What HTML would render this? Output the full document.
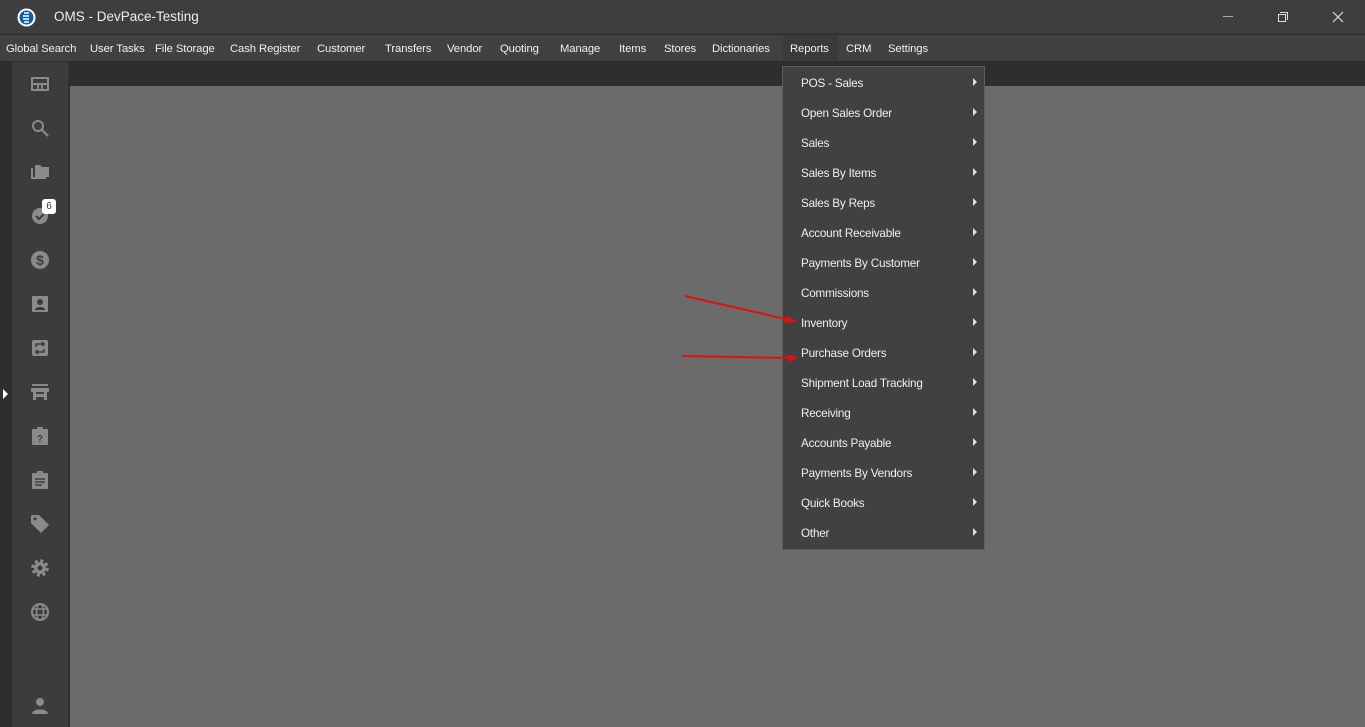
<!DOCTYPE html>
<html><head><style>
*{margin:0;padding:0;box-sizing:border-box}
body{width:1365px;height:727px;overflow:hidden;background:#2e2e2e;font-family:"Liberation Sans",sans-serif;font-size:11px;color:#f0f0f0;position:relative}
.title{position:absolute;left:0;top:0;width:1365px;height:34px;background:#3e3e3e;border-bottom:1px solid #343434}
.title .t{position:absolute;left:54px;top:9px;font-size:13.5px;color:#eee}
.menu{position:absolute;left:0;top:35px;width:1365px;height:26px;background:#414141}
.menu span{position:absolute;top:8px;font-size:11.3px;letter-spacing:-0.1px}
.side{position:absolute;left:12px;top:62px;width:57px;height:665px;background:#3c3c3c;border-right:1px solid #333}
.content{position:absolute;left:70px;top:86px;width:1295px;height:641px;background:#6b6b6b}
.ic{position:absolute;left:18px;width:20px;height:20px}
.dd{position:absolute;left:782px;top:66px;width:203px;height:484px;background:#414141;border:1px solid #5e5e5e}
.dd div{position:absolute;left:18px;font-size:11.7px;letter-spacing:-0.2px;margin-top:2px}
.dd i{position:absolute;left:190px;width:0;height:0;border-left:4px solid #ddd;border-top:4px solid transparent;border-bottom:4px solid transparent}
</style></head><body>
<div class="title">
<svg style="position:absolute;left:17px;top:8px" width="19" height="19" viewBox="0 0 19 19"><circle cx="9.5" cy="9.5" r="9" fill="#fff"/><circle cx="9.5" cy="9.5" r="7" fill="#0b5fa5"/><path d="M7 5h5M6 8h6M6 11h6M7 14h5" stroke="#fff" stroke-width="1.5"/></svg>
<span class="t">OMS - DevPace-Testing</span>
<div style="position:absolute;left:1223px;top:16px;width:10px;height:1px;background:#aaa"></div>
<div style="position:absolute;left:1278px;top:14px;width:8px;height:8px;border:1px solid #ddd"></div>
<div style="position:absolute;left:1280px;top:12px;width:8px;height:8px;border-top:1px solid #ddd;border-right:1px solid #ddd"></div>
<svg style="position:absolute;left:1332px;top:11px" width="12" height="12"><path d="M1 1L11 11M11 1L1 11" stroke="#ddd" stroke-width="1.2"/></svg>
</div>
<div class="menu">
<div style="position:absolute;left:783px;top:0;width:55px;height:26px;background:#3a3a3a"></div>
<span style="left:6px">Global Search</span><span style="left:90px">User Tasks</span><span style="left:155px">File Storage</span><span style="left:230px">Cash Register</span><span style="left:317px">Customer</span><span style="left:385px">Transfers</span><span style="left:447px">Vendor</span><span style="left:500px">Quoting</span><span style="left:560px">Manage</span><span style="left:619px">Items</span><span style="left:664px">Stores</span><span style="left:712px">Dictionaries</span><span style="left:790px">Reports</span><span style="left:846px">CRM</span><span style="left:888px">Settings</span>
</div>
<div class="side">
<svg class="ic" style="top:12px" viewBox="0 0 20 20"><rect x="2" y="4" width="16" height="12" fill="none" stroke="#8a8a8a" stroke-width="2"/><path d="M2 10h16M8 10v6M12 10v6" stroke="#8a8a8a" stroke-width="2"/></svg>
<svg class="ic" style="top:56px" viewBox="0 0 20 20"><circle cx="8" cy="8" r="5" fill="none" stroke="#8a8a8a" stroke-width="2"/><path d="M12 12l6 6" stroke="#8a8a8a" stroke-width="2.2"/></svg>
<svg class="ic" style="top:100px" viewBox="0 0 20 20"><path d="M1 6v11h15v-2H3V6z M5 3h5l2 2h7v10H5z" fill="#8a8a8a"/></svg>
<svg class="ic" style="top:144px" viewBox="0 0 20 20"><circle cx="10" cy="10" r="8" fill="#8a8a8a"/><path d="M6 10l3 3 5-5" stroke="#3c3c3c" stroke-width="2" fill="none"/></svg>
<div style="position:absolute;left:30px;top:137px;width:14px;height:15px;background:#fff;border-radius:3px;color:#333;font-size:10px;text-align:center;line-height:15px">6</div>
<svg class="ic" style="top:188px" viewBox="0 0 20 20"><circle cx="10" cy="10" r="9" fill="#8a8a8a"/><text x="10" y="15" font-size="14" font-weight="bold" text-anchor="middle" fill="#3c3c3c" font-family="Liberation Sans">$</text></svg>
<svg class="ic" style="top:232px" viewBox="0 0 20 20"><rect x="2" y="2" width="16" height="16" rx="1" fill="#8a8a8a"/><circle cx="10" cy="8" r="3" fill="#3c3c3c"/><path d="M5 16c0-4 10-4 10 0z" fill="#3c3c3c"/></svg>
<svg class="ic" style="top:276px" viewBox="0 0 20 20"><rect x="2" y="2" width="16" height="16" rx="2" fill="#8a8a8a"/><path d="M6 9V6h8M12 4l2 2-2 2M14 11v3H6M8 16l-2-2 2-2" stroke="#3c3c3c" stroke-width="1.6" fill="none"/></svg>
<svg class="ic" style="top:320px" viewBox="0 0 20 20"><path d="M2 2h16v2H2zM1 6h18v4H1zM3 10h3v8H3zM14 10h3v8h-3zM6 12h8v3H6z" fill="#8a8a8a"/></svg>
<svg class="ic" style="top:364px" viewBox="0 0 20 20"><rect x="2" y="3" width="16" height="16" rx="1" fill="#8a8a8a"/><rect x="7" y="1" width="6" height="4" fill="#8a8a8a"/><text x="10" y="16" font-size="10" font-weight="bold" text-anchor="middle" fill="#3c3c3c" font-family="Liberation Sans">?</text></svg>
<svg class="ic" style="top:408px" viewBox="0 0 20 20"><rect x="2" y="3" width="16" height="16" rx="1" fill="#8a8a8a"/><rect x="7" y="1" width="6" height="4" fill="#8a8a8a"/><path d="M5 9h10M5 12h10M5 15h7" stroke="#3c3c3c" stroke-width="1.5"/></svg>
<svg class="ic" style="top:452px" viewBox="0 0 20 20"><path d="M1 2v7l10 10 8-8L9 1H2z" fill="#8a8a8a"/><circle cx="5" cy="5" r="1.5" fill="#3c3c3c"/></svg>
<svg class="ic" style="top:496px" viewBox="0 0 20 20"><circle cx="10" cy="10" r="7" fill="none" stroke="#8a8a8a" stroke-width="3.5" stroke-dasharray="3 2.5"/><circle cx="10" cy="10" r="6" fill="#8a8a8a"/><circle cx="10" cy="10" r="2.5" fill="#3c3c3c"/></svg>
<svg class="ic" style="top:540px" viewBox="0 0 20 20"><circle cx="10" cy="10" r="8" fill="none" stroke="#8a8a8a" stroke-width="2"/><ellipse cx="10" cy="10" rx="3.5" ry="8" fill="none" stroke="#8a8a8a" stroke-width="1.6"/><path d="M2 7h16M2 13h16" stroke="#8a8a8a" stroke-width="1.6"/></svg>
<svg class="ic" style="top:634px" viewBox="0 0 20 20"><circle cx="10" cy="6" r="4" fill="#8a8a8a"/><path d="M2 18c0-6 16-6 16 0z" fill="#8a8a8a"/></svg>
</div>
<div style="position:absolute;left:3px;top:389px;border-left:5px solid #fff;border-top:5px solid transparent;border-bottom:5px solid transparent"></div>
<div class="content"></div>
<div class="dd">
<div style="top:8px">POS - Sales</div><i style="top:11px"></i>
<div style="top:38px">Open Sales Order</div><i style="top:41px"></i>
<div style="top:68px">Sales</div><i style="top:71px"></i>
<div style="top:98px">Sales By Items</div><i style="top:101px"></i>
<div style="top:128px">Sales By Reps</div><i style="top:131px"></i>
<div style="top:158px">Account Receivable</div><i style="top:161px"></i>
<div style="top:188px">Payments By Customer</div><i style="top:191px"></i>
<div style="top:218px">Commissions</div><i style="top:221px"></i>
<div style="top:248px">Inventory</div><i style="top:251px"></i>
<div style="top:278px">Purchase Orders</div><i style="top:281px"></i>
<div style="top:308px">Shipment Load Tracking</div><i style="top:311px"></i>
<div style="top:338px">Receiving</div><i style="top:341px"></i>
<div style="top:368px">Accounts Payable</div><i style="top:371px"></i>
<div style="top:398px">Payments By Vendors</div><i style="top:401px"></i>
<div style="top:428px">Quick Books</div><i style="top:431px"></i>
<div style="top:458px">Other</div><i style="top:461px"></i>
</div>
<svg style="position:absolute;left:0;top:0" width="1365" height="727"><path d="M685 296L790 320" stroke="#e01010" stroke-width="2"/><path d="M797 322l-11 -7 -2 8z" fill="#e01010"/><path d="M682 356L790 358" stroke="#e01010" stroke-width="2"/><path d="M798 358l-10 -4 0 8z" fill="#e01010"/></svg>
</body></html>
